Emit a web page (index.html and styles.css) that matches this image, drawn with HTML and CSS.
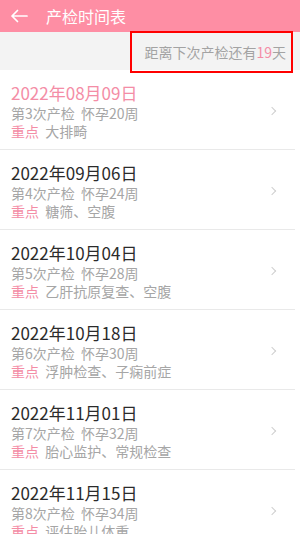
FILE: index.html
```html
<!DOCTYPE html>
<html lang="zh-CN">
<head>
<meta charset="utf-8">
<link rel="stylesheet" href="styles.css">
</head>
<body>
<div class="app">
  <header class="topbar">
    <svg class="back" width="18" height="14" viewBox="0 0 18 14"><path d="M17 7H2M7.5 1.5L2 7l5.5 5.5" fill="none" stroke="#fff" stroke-width="1.7" stroke-linecap="round" stroke-linejoin="round"/></svg>
    <span class="title">产检时间表</span>
  </header>
  <div class="countbar">
    <div class="countbox">距离下次产检还有<span class="pink">19</span>天</div>
  </div>
  <ul class="list">
    <li class="item">
      <div class="info">
        <div class="date current">2022年08月09日</div>
        <div class="sub">第3次产检 怀孕20周</div>
        <div class="sub"><span class="key">重点</span> 大排畸</div>
      </div>
      <span class="chev"></span>
    </li>
    <li class="item">
      <div class="info">
        <div class="date">2022年09月06日</div>
        <div class="sub">第4次产检 怀孕24周</div>
        <div class="sub"><span class="key">重点</span> 糖筛、空腹</div>
      </div>
      <span class="chev"></span>
    </li>
    <li class="item">
      <div class="info">
        <div class="date">2022年10月04日</div>
        <div class="sub">第5次产检 怀孕28周</div>
        <div class="sub"><span class="key">重点</span> 乙肝抗原复查、空腹</div>
      </div>
      <span class="chev"></span>
    </li>
    <li class="item">
      <div class="info">
        <div class="date">2022年10月18日</div>
        <div class="sub">第6次产检 怀孕30周</div>
        <div class="sub"><span class="key">重点</span> 浮肿检查、子痫前症</div>
      </div>
      <span class="chev"></span>
    </li>
    <li class="item">
      <div class="info">
        <div class="date">2022年11月01日</div>
        <div class="sub">第7次产检 怀孕32周</div>
        <div class="sub"><span class="key">重点</span> 胎心监护、常规检查</div>
      </div>
      <span class="chev"></span>
    </li>
    <li class="item">
      <div class="info">
        <div class="date">2022年11月15日</div>
        <div class="sub">第8次产检 怀孕34周</div>
        <div class="sub"><span class="key">重点</span> 评估胎儿体重</div>
      </div>
      <span class="chev"></span>
    </li>
  </ul>
</div>
</body>
</html>
```
FILE: styles.css
```css
* { box-sizing: border-box; }
html, body { margin: 0; padding: 0; background: #fff; }
body {
  font-family: "Noto Sans CJK SC", "Noto Sans", sans-serif;
  width: 300px;
  height: 534px;
  overflow: hidden;
}
.app { width: 300px; }
.topbar {
  height: 32px;
  background: #fe8ea4;
  display: flex;
  align-items: center;
  padding-left: 10px;
}
.back { display: block; }
.title {
  color: #fff;
  font-size: 16px;
  margin-left: 18px;
  line-height: 20px;
}
.countbar {
  height: 38px;
  background: #f3f3f3;
  position: relative;
}
.countbox {
  position: absolute;
  right: 7px;
  top: -1px;
  height: 42px;
  width: 163px;
  border: 2px solid #f00;
  display: flex;
  align-items: center;
  justify-content: flex-end;
  padding-right: 5px;
  font-size: 14px;
  color: #a3a3a3;
}
.pink { color: #f48da6; }
.list {
  list-style: none;
  margin: 0;
  padding: 0;
}
.item {
  display: flex;
  align-items: center;
  padding: 12px 0 9px 11px;
  margin-right: 5px;
  border-bottom: 1px solid #e9e9e9;
}
.info { flex: 1; }
.date {
  font-size: 17px;
  line-height: 22px;
  color: #2b2b2b;
}
.date.current { color: #f48da6; }
.sub {
  font-size: 14px;
  line-height: 18px;
  color: #a6a6a6;
  word-spacing: 3px;
}
.key { color: #f48da6; }
.chev {
  width: 6px;
  height: 6px;
  border-top: 1px solid #cfcfcf;
  border-right: 1px solid #cfcfcf;
  transform: rotate(45deg);
  margin-right: 20px;
}
```
